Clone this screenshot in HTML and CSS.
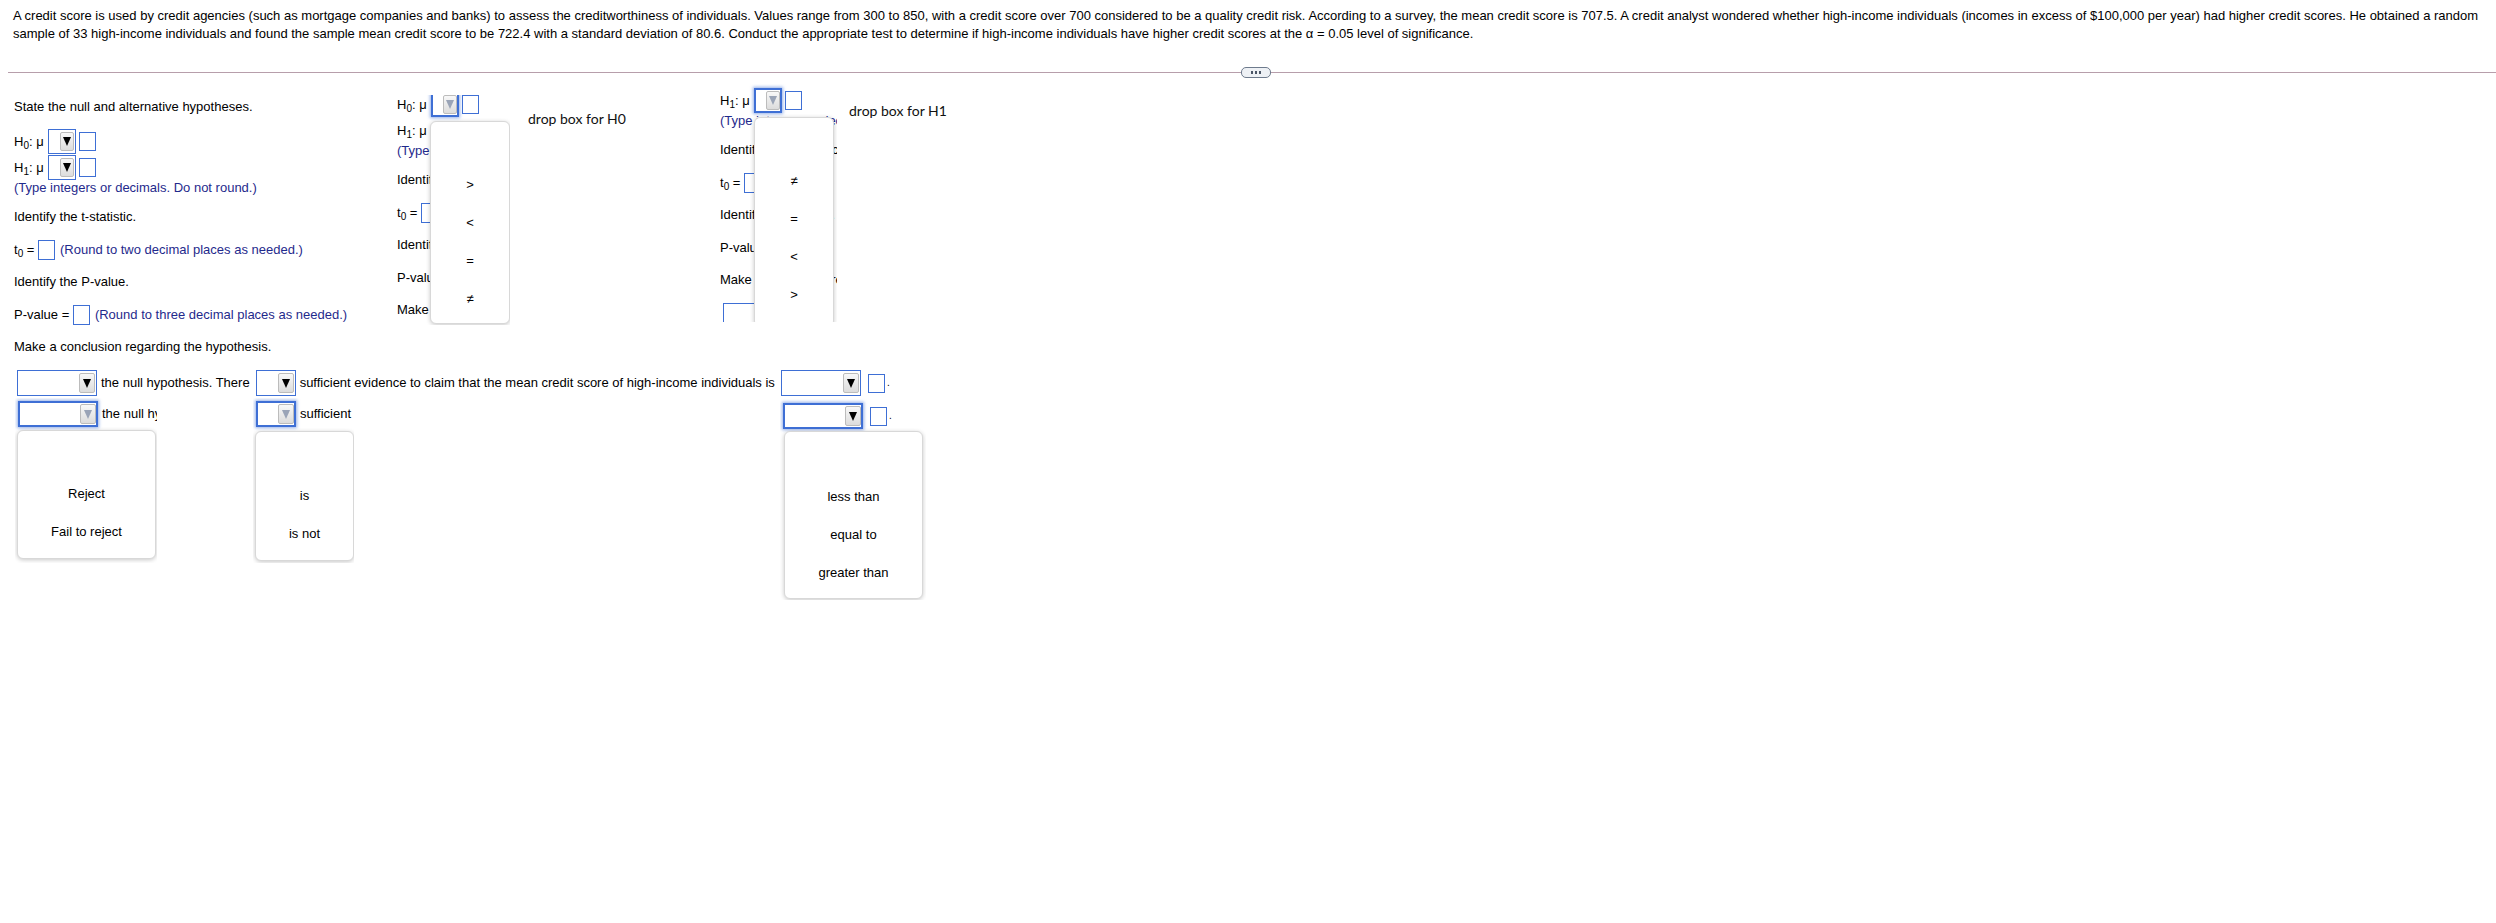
FILE: index.html
```html
<!DOCTYPE html>
<html lang="en">
<head>
  <meta charset="UTF-8">
  <meta name="viewport" content="width=device-width, initial-scale=1.0">
  <title>Hypothesis test - credit scores</title>
  <link rel="stylesheet" href="styles.css">
</head>
<body>
  <p class="intro">A credit score is used by credit agencies (such as mortgage companies and banks) to assess the creditworthiness of individuals. Values range from 300 to 850, with a credit score over 700 considered to be a quality credit risk. According to a survey, the mean credit score is 707.5. A credit analyst wondered whether high-income individuals (incomes in excess of $100,000 per year) had higher credit scores. He obtained a random sample of 33 high-income individuals and found the sample mean credit score to be 722.4 with a standard deviation of 80.6. Conduct the appropriate test to determine if high-income individuals have higher credit scores at the α = 0.05 level of significance.</p>

  <div class="divider">
    <span class="rule"></span>
    <span class="grip"><i></i><i></i><i></i></span>
    <span class="rule"></span>
  </div>

  <div class="work">
    <section class="questions">
      <p class="q">State the null and alternative hypotheses.</p>
      <div class="hyp"><span class="sym">H<sub>0</sub>: μ</span><span class="dd sm"><b class="btn"></b></span><span class="blank"></span></div>
      <div class="hyp"><span class="sym">H<sub>1</sub>: μ</span><span class="dd sm"><b class="btn"></b></span><span class="blank"></span></div>
      <p class="hint">(Type integers or decimals. Do not round.)</p>
      <p class="q">Identify the t-statistic.</p>
      <div class="answer"><span>t<sub>0</sub> = </span><span class="blank"></span><span class="hint">(Round to two decimal places as needed.)</span></div>
      <p class="q">Identify the P-value.</p>
      <div class="answer"><span>P-value = </span><span class="blank"></span><span class="hint">(Round to three decimal places as needed.)</span></div>
      <p class="q">Make a conclusion regarding the hypothesis.</p>
    </section>

    <!-- snapshot of the H0 menu open -->
    <div class="snap snap-h0">
      <div class="hyp"><span class="sym">H<sub>0</sub>: μ</span><span class="dd sm focus dim"><b class="btn"></b></span><span class="blank"></span></div>
      <div class="hyp"><span class="sym">H<sub>1</sub>: μ</span></div>
      <p class="hint">(Type integers or decimals. Do not round.)</p>
      <p class="q">Identify the t-statistic.</p>
      <div class="answer"><span>t<sub>0</sub> = </span><span class="blank"></span></div>
      <p class="q">Identify the P-value.</p>
      <div class="answer"><span>P-value = </span><span class="blank"></span></div>
      <p class="q">Make a conclusion regarding the hypothesis.</p>
      <ul class="menu">
        <li></li>
        <li>&gt;</li>
        <li>&lt;</li>
        <li>=</li>
        <li>≠</li>
      </ul>
    </div>
    <p class="note note-h0">drop box for H0</p>

    <!-- snapshot of the H1 menu open -->
    <div class="snap snap-h1">
      <div class="hyp"><span class="sym">H<sub>1</sub>: μ</span><span class="dd sm focus dim"><b class="btn"></b></span><span class="blank"></span></div>
      <p class="hint">(Type integers or decimals. Do not round.)</p>
      <p class="q">Identify the t-statistic.</p>
      <div class="answer"><span>t<sub>0</sub> = </span><span class="blank"></span></div>
      <p class="q">Identify the P-value.</p>
      <div class="answer"><span>P-value = </span><span class="blank"></span></div>
      <p class="q">Make a conclusion regarding the hypothesis.</p>
      <div class="conclusion"><span class="dd"><b class="btn"></b></span></div>
      <ul class="menu">
        <li></li>
        <li>≠</li>
        <li>=</li>
        <li>&lt;</li>
        <li>&gt;</li>
      </ul>
    </div>
    <p class="note note-h1">drop box for H1</p>
  </div>

  <div class="conclusion">
    <span class="dd"><b class="btn"></b></span>
    <span class="txt">the null hypothesis. There</span>
    <span class="dd md"><b class="btn"></b></span>
    <span class="txt">sufficient evidence to claim that the mean credit score of high-income individuals is</span>
    <span class="dd"><b class="btn"></b></span>
    <span class="blank"></span><span class="dot">.</span>
  </div>

  <div class="snaps">
    <div class="snap snap-c1">
      <div class="pick"><span class="dd focus dim"><b class="btn"></b></span><span class="txt">the null hypothesis. There</span></div>
      <ul class="menu">
        <li></li>
        <li>Reject</li>
        <li>Fail to reject</li>
      </ul>
    </div>
    <div class="snap snap-c2">
      <div class="pick"><span class="dd md focus dim"><b class="btn"></b></span><span class="txt">sufficient evidence to claim</span></div>
      <ul class="menu">
        <li></li>
        <li>is</li>
        <li>is not</li>
      </ul>
    </div>
    <div class="snap snap-c3">
      <div class="pick"><span class="dd focus"><b class="btn"></b></span><span class="blank"></span><span class="dot">.</span></div>
      <ul class="menu">
        <li></li>
        <li>less than</li>
        <li>equal to</li>
        <li>greater than</li>
      </ul>
    </div>
  </div>
</body>
</html>
```

FILE: styles.css
```css
* {
  box-sizing: border-box;
  margin: 0;
  padding: 0;
}

body {
  width: 2496px;
  background-color: #fff;
  color: #000;
  font-family: "Liberation Sans", Arial, sans-serif;
  font-size: 13px;
  line-height: 18px;
}

sub {
  font-size: 10px;
  line-height: 0;
  vertical-align: -3px;
}

.intro {
  padding: 7px 12px 0 13px;
}

/* splitter under the question text */
.divider {
  display: flex;
  align-items: center;
  height: 11px;
  margin: 24px 0 0 8px;
}

.divider .rule {
  flex: 1;
  height: 1px;
  background-color: #b79eab;
}

.divider .rule:first-child {
  flex: 0 0 1233px;
}

.grip {
  display: flex;
  align-items: center;
  justify-content: center;
  gap: 2px;
  width: 30px;
  height: 11px;
  border: 1px solid #6e7b8d;
  border-radius: 5px;
  background-color: #eef1f5;
}

.grip i {
  width: 2px;
  height: 3px;
  background-color: #4b5667;
}

.work {
  display: flex;
  align-items: flex-start;
  margin-top: 6px;
}

.questions {
  flex: 0 0 393px;
  padding: 14px 0 0 14px;
}

.q + .hyp { margin-top: 13px; }
.hyp + .hyp { margin-top: 1px; }
.hyp + .hint { margin-top: -1px; }
.hint + .q { margin-top: 11px; }
.q + .answer { margin-top: 14px; }
.answer + .q { margin-top: 13px; }
.q + .conclusion { margin-top: 14px; }

.q,
.hint {
  white-space: nowrap;
}

.hint {
  color: #1f2a8c;
}

.hyp {
  display: flex;
  align-items: center;
  height: 25px;
}

.hyp .sym {
  margin-right: 4px;
  white-space: nowrap;
}

.hyp .blank {
  margin-left: 3px;
}

.answer {
  display: flex;
  align-items: center;
  height: 20px;
  white-space: pre;
}

.answer .blank {
  height: 20px;
  margin-right: 5px;
}

/* select box */
.dd {
  display: inline-flex;
  justify-content: flex-end;
  flex-shrink: 0;
  width: 80px;
  height: 26px;
  padding: 2px 1px;
  border: 1px solid #3e6fd5;
  background-color: #fff;
}

.dd .btn {
  display: flex;
  align-items: center;
  justify-content: center;
  width: 16px;
  border: 1px solid #bcbcbc;
  border-radius: 2px;
  background: linear-gradient(#f8f8f8, #dcdcdc);
}

.dd .btn::after {
  content: "";
  border-left: 4px solid transparent;
  border-right: 4px solid transparent;
  border-top: 9px solid #000;
}

.dd.dim .btn::after {
  border-top-color: #9aa4b7;
}

.dd.focus {
  border-width: 2px;
  padding: 1px 0;
  box-shadow: 0 0 3px 1px rgba(62, 111, 213, 0.55);
}

.dd.sm {
  width: 28px;
  height: 25px;
}

.dd.sm .btn {
  width: 14px;
}

.dd.md {
  width: 40px;
}

.blank {
  display: inline-block;
  flex-shrink: 0;
  width: 17px;
  height: 19px;
  border: 1px solid #3e6fd5;
  background-color: #fff;
}

.conclusion {
  display: flex;
  align-items: center;
  height: 26px;
  margin-top: 14px;
  padding-left: 17px;
  white-space: nowrap;
}

.conclusion .txt {
  margin: 0 6px 0 4px;
}

.conclusion .blank,
.pick .blank {
  margin-left: 7px;
}

.dot {
  margin-left: 2px;
  font-size: 10px;
}

/* screenshots of open menus */
.snap {
  position: relative;
  flex-shrink: 0;
  overflow: hidden;
  background-color: #fff;
}

.menu {
  position: absolute;
  padding: 6px 0 5px;
  border: 1px solid #d8d8d8;
  border-radius: 6px;
  background-color: #fff;
  box-shadow: 0 1px 4px rgba(0, 0, 0, 0.22);
  list-style: none;
  text-align: center;
}

.menu li {
  height: 38px;
  line-height: 38px;
  white-space: nowrap;
}

.snap-h0 {
  width: 117px;
  height: 230px;
  margin-top: 11px;
  padding-left: 4px;
}

.snap-h0 > .hyp:first-child {
  margin-top: -3px;
}

.snap-h0 .menu {
  left: 37px;
  top: 26px;
  width: 80px;
}

.snap-h1 {
  width: 121px;
  height: 238px;
  margin-left: 93px;
  padding-left: 4px;
}

.snap-h1 > .hyp:first-child {
  margin-top: 4px;
}

.snap-h1 .conclusion {
  padding-left: 3px;
}

.snap-h1 .menu {
  left: 38px;
  top: 33px;
  width: 80px;
  padding-bottom: 12px;
}

.note {
  flex-shrink: 0;
  font-family: Lato, "Open Sans", sans-serif;
  font-size: 14px;
  line-height: 18px;
  color: #111;
  white-space: nowrap;
}

.note-h0 {
  width: 95px;
  margin: 26px 0 0 18px;
}

.note-h1 {
  margin: 18px 0 0 12px;
}

.snaps {
  display: flex;
  align-items: flex-start;
  margin-top: 2px;
}

.pick {
  display: flex;
  align-items: center;
  padding: 3px 0 0 3px;
  white-space: nowrap;
}

.pick .txt {
  margin-left: 4px;
}

.snap-c1 {
  width: 142px;
  height: 165px;
  margin-left: 15px;
}

.snap-c1 .menu {
  left: 2px;
  top: 32px;
  width: 139px;
  padding: 6px 0 7px;
}

.snap-c2 {
  width: 101px;
  height: 165px;
  margin-left: 96px;
}

.snap-c2 .menu {
  left: 2px;
  top: 33px;
  width: 99px;
  padding: 7px 0 7px;
}

.snap-c3 {
  width: 146px;
  height: 202px;
  margin-left: 426px;
}

.snap-c3 .pick {
  padding-top: 5px;
}

.snap-c3 .menu {
  left: 4px;
  top: 33px;
  width: 139px;
  padding: 8px 0 6px;
}
```
